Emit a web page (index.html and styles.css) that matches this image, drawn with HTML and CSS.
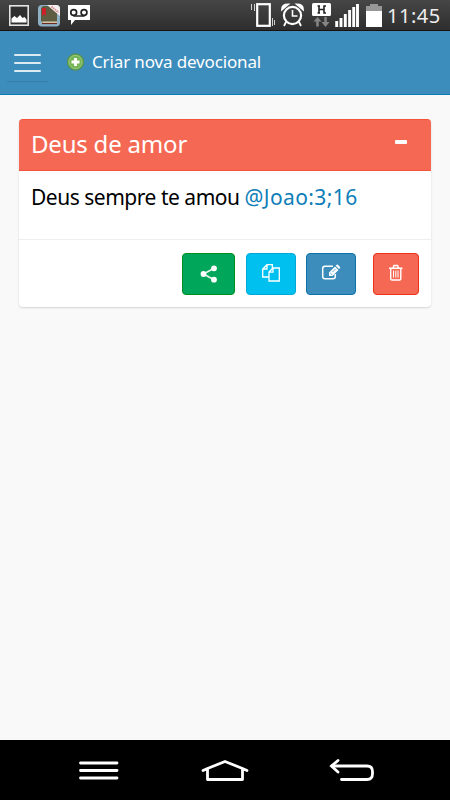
FILE: index.html
```html
<!DOCTYPE html>
<html lang="pt">
<head>
    <meta charset="UTF-8">
    <meta name="viewport" content="width=device-width, initial-scale=1.0">
    <title>Devocional</title>
    <link rel="stylesheet" href="styles.css">
</head>
<body>
    <div class="status-bar">
        <svg class="status-left" width="100" height="31" viewBox="0 0 100 31">
            <rect x="9.8" y="5.8" width="18.4" height="19.4" fill="#303030" stroke="#e4e4e4" stroke-width="1.6"/>
            <path d="M11.5 22.5v-4l3-2.5 2.5 2 3-3 2.5 3 2-1 2 2.500v3z" fill="#fff"/>
            <rect x="38" y="5" width="22" height="21.500" rx="4" fill="#8db0c4"/>
            <path d="M41 8l2-2h9l5 7v10H43l-2-2z" fill="#5e5d42"/>
            <path d="M42 8h4v8l-2-2-2 2z" fill="#cf1f2b"/>
            <path d="M42 21.500h15v2H43z" fill="#ded5b4"/>
            <path d="M42 23.500h15" stroke="#6b2a20" stroke-width="1.200"/>
            <path d="M47 5h9q4 0 4 4v7z" fill="#f4eeee"/>
            <path d="M51.500 6.500l7 6" stroke="#dd8b90" stroke-width="1.800" stroke-dasharray="1.500 .7"/>
            <path d="M68 5h22v15H75l-4 5v-5h-3z" fill="#fff"/>
            <circle cx="73.700" cy="12.500" r="2.900" fill="none" stroke="#222" stroke-width="1.700"/>
            <circle cx="84" cy="12.500" r="2.900" fill="none" stroke="#222" stroke-width="1.700"/>
            <path d="M73.500 16h11" stroke="#222" stroke-width="1.500"/>
        </svg>
        <div class="status-right">
            <svg width="136" height="31" viewBox="248 0 136 31">
                <!-- vibrate -->
                <rect x="257.200" y="4.200" width="12.600" height="21.600" fill="none" stroke="#fff" stroke-width="2.200"/>
                <path d="M251.500 4v6M254.500 4v7M272.500 18v8M274.500 20v5" stroke="#d0d0d0" stroke-width="1"/>
                <!-- alarm -->
                <circle cx="292.500" cy="15.500" r="8.600" fill="none" stroke="#fff" stroke-width="2.200"/>
                <path d="M292.500 10v6h5" fill="none" stroke="#fff" stroke-width="1.600"/>
                <path d="M282 9.500q0-5 6-5zM303 9.500q0-5-6-5zM286 22l-2 4M299 22l2 4" fill="#fff" stroke="#fff" stroke-width="1.800"/>
                <!-- data -->
                <rect x="312" y="3" width="19" height="13" rx="1.500" fill="#fff"/>
                <path d="M319 5.500v8M324 5.500v8M319 9.500h5M317.500 6h2.500M323.500 6h2.500M317.500 13h2.500M323.500 13h2.500" stroke="#222" stroke-width="1.600"/>
                <path d="M313.500 21.500l4-4.500 4 4.500h-2.800v5h-2.500v-5zM321.500 22h2.800v-5h2.500v5h2.700l-4 5z" fill="#858585"/>
                <!-- signal -->
                <path d="M336.700 21v6M341 18v9M345.300 14v13M349.600 10v17M353.700 7v20M357.500 4v23" stroke="#fff" stroke-width="2.900"/>
                <!-- battery -->
                <path d="M366 11V6h4V4h8v2h4v5z" fill="#979797"/>
                <path d="M366 11h16v16h-16z" fill="#fff"/>
            </svg>
            <span class="clock">11:45</span>
        </div>
    </div>

    <header>
        <a href="#" class="menu-toggle"><span></span><span></span><span></span></a>
        <a href="#" class="new-item">
            <svg width="18" height="18" viewBox="0 0 18 18">
                <circle cx="8.500" cy="9" r="8.300" fill="#61a34d" stroke="#538c56" stroke-width="1"/>
                <circle cx="8.500" cy="9" r="6.700" fill="#77b657" stroke="#a3cf88" stroke-width=".8"/>
                <path d="M8.500 5v8M4.500 9h8" stroke="#fff" stroke-width="2.800"/>
            </svg>
            <span>Criar nova devocional</span>
        </a>
    </header>

    <main class="content">
        <div class="box">
            <div class="box-header">
                <h3>Deus de amor</h3>
                <span class="collapse"></span>
            </div>
            <div class="box-body">Deus sempre te amou <a href="#">@Joao:3;16</a></div>
            <div class="box-footer">
                <a href="#" class="btn btn-share">
                    <svg width="20" height="20" viewBox="0 0 20 20">
                        <path d="M15 4.300L4.500 10l10.500 5.700" fill="none" stroke="#e4f5ec" stroke-width="1.600"/>
                        <circle cx="4.500" cy="10" r="2.900"/><circle cx="15" cy="4.300" r="2.900"/><circle cx="15" cy="15.700" r="2.900"/>
                    </svg>
                </a>
                <a href="#" class="btn btn-copy">
                    <svg width="20" height="20" viewBox="0 0 20 20">
                        <path d="M8 14H1.700V6L6 1.700h5.300V6M6 1.700V6H1.700M8 18V9l4-4h6.300v13zM12 5v4.200H8" fill="none" stroke="#fff" stroke-width="1.300"/>
                    </svg>
                </a>
                <a href="#" class="btn btn-edit">
                    <svg width="20" height="20" viewBox="0 0 20 20">
                        <path d="M12 3.200H4q-2.300 0-2.300 2.300v8q0 2.300 2.300 2.300h8q2.300 0 2.300-2.300v-2.500" fill="none" stroke="#fff" stroke-width="1.500"/>
                        <path d="M8 13V9.500l6-6L17.500 7l-6 6zM14.700 2.800l1-1q.6-.5 1.200 0l2.100 2.100q.6.600 0 1.200l-1 1z"/>
                        <path d="M9.300 10l1.700 1.700M11.500 9l3-3" stroke="#3c8dbc" stroke-width=".8"/>
                    </svg>
                </a>
                <a href="#" class="btn btn-delete">
                    <svg width="16" height="20" viewBox="0 0 16 20">
                        <path d="M1 5.200h13.500M5 5l1-2.500h3.500L10.500 5M2.700 5.200v10.500q0 1.300 1.300 1.300h7.500q1.300 0 1.300-1.300V5.200" fill="none" stroke="#fff" stroke-width="1.400"/>
                        <path d="M5.500 7.500v7M7.800 7.500v7M10 7.500v7" stroke="#fff" stroke-width="1"/>
                    </svg>
                </a>
            </div>
        </div>
    </main>

    <nav class="system-nav">
        <svg width="450" height="60" viewBox="0 740 450 60">
            <g fill="none" stroke="#fff" stroke-width="2.800" stroke-linecap="round" stroke-linejoin="round">
                <path d="M80.500 763h36.500M80.500 770.500h36.500M80.500 778h36.500"/>
                <path d="M203 770.500l4.500-2L225 761.500l17.500 7 4.500 2M207.500 769v10.500h35V769"/>
                <path d="M341.500 779.500H367q5.500 0 5.500-6v-2q0-5.500-5.500-5.500H332"/>
                <path d="M338 760.500l-6.500 5.500 6.500 6" stroke-linejoin="miter"/>
            </g>
        </svg>
    </nav>
</body>
</html>
```

FILE: styles.css
```css
body {
    font-family: "Noto Sans", "Open Sans", sans-serif;
    background-color: #f9f9f9;
    color: #000;
    margin: 0;
    height: 800px;
    display: flex;
    flex-direction: column;
    overflow: hidden;
}
* {
    box-sizing: border-box;
}
a {
    color: #0d7eb8;
    text-decoration: none;
}
svg {
    display: block;
    flex: none;
}
/* Android status bar */
.status-bar {
    height: 31px;
    display: flex;
    justify-content: space-between;
    background: linear-gradient(#464646, #2e2e2e);
    border-bottom: 1px solid #1c1010;
}
.status-right {
    display: flex;
    padding-right: 9px;
}
.clock {
    width: 57px;
    padding-left: 3px;
    color: #eee;
    font-size: 20px;
    line-height: 32px;
    letter-spacing: 0.5px;
    white-space: nowrap;
}
/* App header */
header {
    height: 64px;
    display: flex;
    background-color: #3c8dbc;
    border-bottom: 1px solid #0b7cb9;
    padding-left: 7px;
}
.menu-toggle {
    width: 41px;
    height: 51px;
    padding: 23px 7px 0 7px;
    display: flex;
    flex-direction: column;
    gap: 6px;
    border-bottom: 1px solid #367fa9;
}
.menu-toggle span {
    height: 2px;
    flex: none;
    border-radius: 1px;
    background-color: #dceaf3;
}
.new-item {
    height: 61px;
    margin-left: 19px;
    display: flex;
    align-items: center;
    gap: 7px;
    color: #fff;
    font-size: 17px;
    letter-spacing: -0.14px;
}
/* Card */
.content {
    flex: 1;
    padding: 24px 19px 0 19px;
}
.box {
    height: 188px;
    display: flex;
    flex-direction: column;
    background-color: #fff;
    border-radius: 4px;
    box-shadow: 0 1px 2px rgba(0, 0, 0, 0.15);
}
.box-header {
    height: 52px;
    padding: 0 24px 0 12px;
    display: flex;
    justify-content: space-between;
    background-color: #f56954;
    border: 1px solid #f4543c;
    border-width: 1px 0;
    border-radius: 4px 4px 0 0;
}
.box-header h3 {
    margin: 0;
    color: #fff;
    font-size: 24px;
    font-weight: normal;
    line-height: 48px;
    letter-spacing: -0.2px;
}
.collapse {
    width: 12px;
    height: 4px;
    margin-top: 20px;
    border-radius: 1px;
    background-color: #fff;
}
.box-body {
    height: 68px;
    padding: 9px 12px;
    font-size: 21px;
    line-height: 34px;
    letter-spacing: -0.48px;
    white-space: nowrap;
}
.box-body a {
    letter-spacing: 0.4px;
}
.box-footer {
    flex: 1;
    padding: 13px 12px 0 0;
    display: flex;
    justify-content: flex-end;
    border-top: 1px solid #eee;
}
.btn {
    height: 42px;
    display: flex;
    align-items: center;
    justify-content: center;
    border: 1px solid;
    border-radius: 4px;
    fill: #fff;
}
.btn-share {
    width: 53px;
    margin-right: 11px;
    background-color: #00a65a;
    border-color: #008d20;
}
.btn-copy {
    width: 50px;
    margin-right: 10px;
    background-color: #00c0ef;
    border-color: #00a7d7;
}
.btn-edit {
    width: 50px;
    margin-right: 17px;
    background-color: #3c8dbc;
    border-color: #0c73a9;
}
.btn-delete {
    width: 46px;
    background-color: #f56954;
    border-color: #f03017;
}
.btn-edit svg,
.btn-delete svg,
.btn-copy svg {
    margin-bottom: 2px;
}
.system-nav {
    height: 60px;
    background-color: #000;
}
```
